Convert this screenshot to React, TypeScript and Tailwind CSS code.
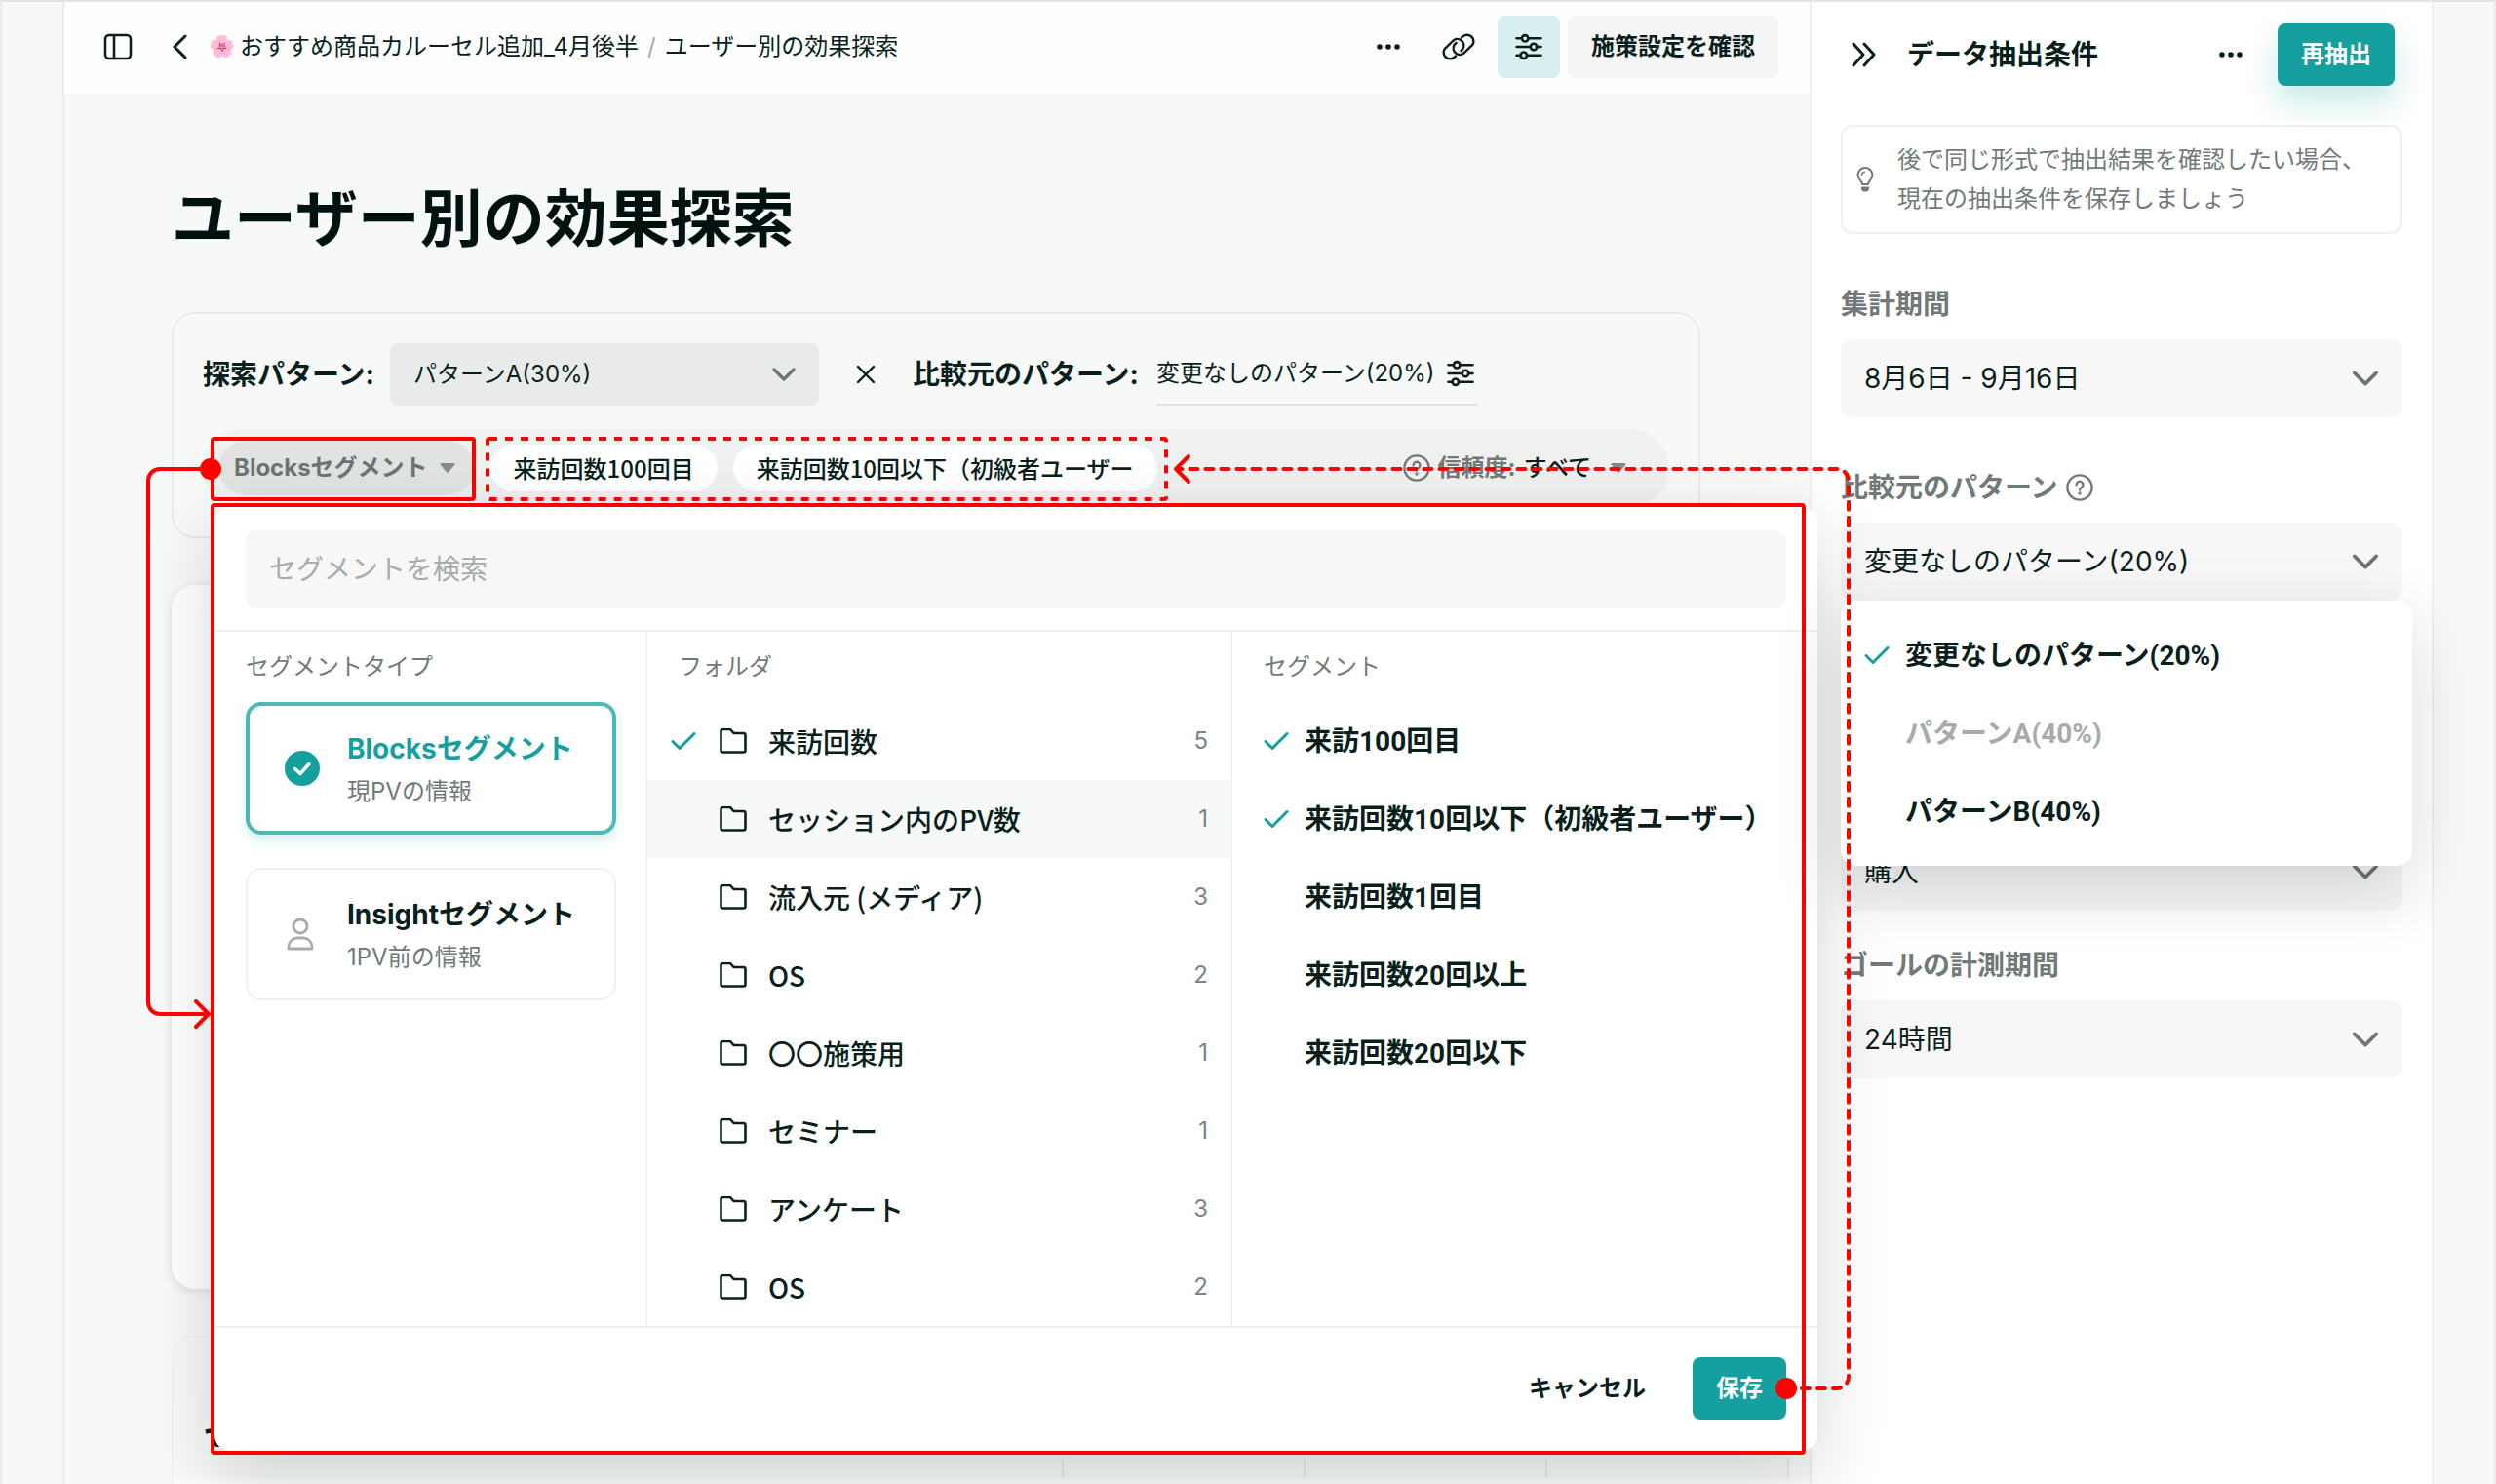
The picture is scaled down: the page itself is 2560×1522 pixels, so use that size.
import type { ReactNode } from "react";

type IconProps = { className?: string };

function PanelIcon({ className }: IconProps) {
  return (
    <svg viewBox="0 0 30 28" fill="none" stroke="currentColor" strokeWidth="2.5" className={className}>
      <rect x="2" y="2" width="26" height="24" rx="4" />
      <path d="M11 2v24" />
    </svg>
  );
}

function ChevronIcon({ className }: IconProps) {
  return (
    <svg viewBox="0 0 24 16" fill="none" stroke="currentColor" strokeWidth="3.2" strokeLinecap="round" strokeLinejoin="round" className={className}>
      <path d="M2 3l10 10L22 3" />
    </svg>
  );
}

function BackIcon({ className }: IconProps) {
  return (
    <svg viewBox="0 0 16 28" fill="none" stroke="currentColor" strokeWidth="3" strokeLinecap="round" strokeLinejoin="round" className={className}>
      <path d="M14 3L3 14l11 11" />
    </svg>
  );
}

function CollapseIcon({ className }: IconProps) {
  return (
    <svg viewBox="0 0 28 28" fill="none" stroke="currentColor" strokeWidth="3" strokeLinecap="round" strokeLinejoin="round" className={className}>
      <path d="M3 3l10 11L3 25M14 3l10 11-10 11" />
    </svg>
  );
}

function DotsIcon({ className }: IconProps) {
  return (
    <svg viewBox="0 0 24 24" fill="currentColor" className={className}>
      <circle cx="3" cy="12" r="2.8" />
      <circle cx="12" cy="12" r="2.8" />
      <circle cx="21" cy="12" r="2.8" />
    </svg>
  );
}

function LinkIcon({ className }: IconProps) {
  return (
    <svg viewBox="0 0 34 28" fill="none" stroke="currentColor" strokeWidth="2.5" strokeLinecap="round" className={className}>
      <path d="M14 23.5L12.5 24.8A6.6 6.6 0 0 1 3.2 15.5L12 7.2A6.6 6.6 0 0 1 21.3 16.2L19.5 18" />
      <path d="M20 4.5L21.5 3.2A6.6 6.6 0 0 1 30.8 12.5L22 20.8A6.6 6.6 0 0 1 12.7 11.8L14.5 10" />
    </svg>
  );
}

function SlidersIcon({ className }: IconProps) {
  return (
    <svg viewBox="0 0 28 28" fill="none" stroke="currentColor" strokeWidth="2.6" strokeLinecap="round" className={className}>
      <path d="M1.5 5.3h5M14 5.3h12.5M1.5 14h14M23 14h3.5M1.5 22.7h3.5M12.5 22.7h14" />
      <circle cx="10.2" cy="5.3" r="3.2" />
      <circle cx="19" cy="14" r="3.2" />
      <circle cx="8.8" cy="22.7" r="3.2" />
    </svg>
  );
}

function CheckIcon({ className }: IconProps) {
  return (
    <svg viewBox="0 0 26 20" fill="none" stroke="currentColor" strokeWidth="3" strokeLinecap="round" strokeLinejoin="round" className={className}>
      <path d="M2 10.5l7 7L24 2.5" />
    </svg>
  );
}

function CheckCircleIcon({ className }: IconProps) {
  return (
    <svg viewBox="0 0 36 36" fill="none" className={className}>
      <circle cx="18" cy="18" r="18" fill="currentColor" />
      <path d="M10.5 18.5l5.5 5 9-10" stroke="white" strokeWidth="3.4" strokeLinecap="round" strokeLinejoin="round" />
    </svg>
  );
}

function FolderIcon({ className }: IconProps) {
  return (
    <svg viewBox="0 0 28 26" fill="none" stroke="currentColor" strokeWidth="2.6" strokeLinejoin="round" className={className}>
      <path d="M1.5 3a2 2 0 0 1 2-2h7.500l3.500 4h10a2 2 0 0 1 2 2v15.500a2 2 0 0 1-2 2h-21a2 2 0 0 1-2-2z" />
    </svg>
  );
}

function UserIcon({ className }: IconProps) {
  return (
    <svg viewBox="0 0 28 34" fill="none" stroke="currentColor" strokeWidth="2.8" strokeLinejoin="round" className={className}>
      <circle cx="14" cy="9" r="7" />
      <path d="M2 32v-2c0-5 4-9 9-9h6c5 0 9 4 9 9v2z" />
    </svg>
  );
}

function HelpIcon({ className }: IconProps) {
  return (
    <svg viewBox="0 0 28 28" fill="none" stroke="currentColor" strokeWidth="2.4" strokeLinecap="round" className={className}>
      <circle cx="14" cy="14" r="12.6" />
      <path d="M10.6 11.2a3.4 3.4 0 1 1 5.2 2.9c-1.2.8-1.8 1.2-1.8 2.4" />
      <circle cx="14" cy="20" r="0.6" fill="currentColor" />
    </svg>
  );
}

function BulbIcon({ className }: IconProps) {
  return (
    <svg viewBox="0 0 18 26" fill="none" stroke="currentColor" strokeWidth="2" strokeLinecap="round" strokeLinejoin="round" className={className}>
      <path d="M6 18c0-4-4.500-5-4.500-9.500a7.500 7.500 0 0 1 15 0C16.500 13 12 14 12 18z" />
      <path d="M5.500 8.500A3.500 3.500 0 0 1 8.500 5.200" strokeWidth="1.500" />
      <path d="M6 21.500h6v1.500l-1.500 1.500h-3L6 23z" fill="currentColor" />
    </svg>
  );
}

function CaretIcon({ className }: IconProps) {
  return (
    <svg viewBox="0 0 16 10" fill="currentColor" className={className}>
      <path d="M1.500 0h13a1 1 0 0 1 .7 1.700l-6.200 7.600a1.300 1.300 0 0 1-2 0L.8 1.700A1 1 0 0 1 1.500 0z" />
    </svg>
  );
}

function Header() {
  return (
    <header className="flex h-[94px] shrink-0 items-center bg-[#fdfdfd] pr-8 pb-0.5 pl-10">
      <button type="button" aria-label="サイドバーを開閉">
        <PanelIcon className="h-7 w-[30px]" />
      </button>
      <a href="#" aria-label="戻る" className="ml-10">
        <BackIcon className="h-7 w-4" />
      </a>
      <nav className="ml-[22px] flex items-center text-2xl">
        <a href="#" className="flex items-center gap-2">
          <span className="w-6 text-[22px]">🌸</span>
          おすすめ商品カルーセル追加_4月後半
        </a>
        <span className="px-[9px] text-[#a5acaa]">/</span>
        <a href="#">ユーザー別の効果探索</a>
      </nav>
      <div className="ml-auto flex items-center">
        <button type="button" aria-label="その他">
          <DotsIcon className="size-6" />
        </button>
        <button type="button" aria-label="リンクをコピー" className="ml-[43px]">
          <LinkIcon className="h-7 w-[34px]" />
        </button>
        <button type="button" aria-label="抽出条件" className="ml-[23px] flex size-16 items-center justify-center rounded-lg bg-[#d9f0f0]">
          <SlidersIcon className="size-7" />
        </button>
        <button type="button" className="ml-2 h-16 rounded-lg bg-[#f5f5f5] px-6 text-2xl font-bold">
          施策設定を確認
        </button>
      </div>
    </header>
  );
}

function FilterPanel() {
  return (
    <section className="rounded-3xl border-2 border-[#e9ebea] p-[30px]">
      <div className="flex h-16 items-center">
        <label htmlFor="pattern" className="text-[28px] font-bold">
          探索パターン:
        </label>
        <div className="ml-4 grid w-[440px] items-center">
          <select id="pattern" className="col-start-1 row-start-1 h-16 appearance-none rounded-lg bg-[#e9ebea] pl-6 text-2xl">
            <option>パターンA(30%)</option>
            <option>パターンB(40%)</option>
          </select>
          <ChevronIcon className="pointer-events-none col-start-1 row-start-1 mr-6 h-4 w-6 justify-self-end text-[#6b7573]" />
        </div>
        <svg viewBox="0 0 20 20" fill="none" stroke="currentColor" strokeWidth="2.4" strokeLinecap="round" className="ml-[38px] size-5">
          <path d="M2 2l16 16M18 2L2 18" />
        </svg>
        <span className="ml-[38px] text-[28px] font-bold">比較元のパターン:</span>
        <button type="button" className="ml-[18px] flex h-16 items-center gap-3 border-b-2 border-[#e0e3e2] pr-1 text-2xl">
          変更なしのパターン(20%)
          <SlidersIcon className="size-7" />
        </button>
      </div>
      <div className="mt-6 flex h-20 items-center rounded-full bg-[#eff1f0] pr-11 pl-4">
        <button type="button" className="flex h-14 items-center gap-3 rounded-full bg-[#e0e3e2] pr-5 pl-4 text-2xl font-bold text-[#6b7573]">
          Blocksセグメント
          <CaretIcon className="h-2.5 w-4 text-[#848c8a]" />
        </button>
        <div className="ml-4 flex gap-4 font-['Noto_Sans_CJK_JP',sans-serif] text-2xl font-medium">
          <span className="flex h-12 items-center rounded-full bg-white px-6">来訪回数100回目</span>
          <span className="flex h-12 items-center rounded-full bg-white px-6">来訪回数10回以下（初級者ユーザー</span>
        </div>
        <button type="button" className="ml-auto flex items-center gap-2 text-2xl">
          <HelpIcon className="size-7 text-[#717a78]" />
          <span className="font-bold text-[#717a78]">信頼度:</span>
          <span className="font-medium">すべて</span>
          <CaretIcon className="ml-3 h-2.5 w-4 text-[#848c8a]" />
        </button>
      </div>
    </section>
  );
}

const folders = [
  { name: "来訪回数", count: 5, checked: true },
  { name: "セッション内のPV数", count: 1, active: true },
  { name: "流入元 (メディア)", count: 3 },
  { name: "OS", count: 2 },
  { name: "〇〇施策用", count: 1 },
  { name: "セミナー", count: 1 },
  { name: "アンケート", count: 3 },
  { name: "OS", count: 2 },
];

const segments = [
  { name: "来訪100回目", checked: true },
  { name: "来訪回数10回以下（初級者ユーザー）", checked: true },
  { name: "来訪回数1回目" },
  { name: "来訪回数20回以上" },
  { name: "来訪回数20回以下" },
];

function ColumnTitle({ children }: { children: ReactNode }) {
  return <h3 className="flex h-[72px] items-center text-2xl text-[#717a78]">{children}</h3>;
}

function SegmentDialog() {
  return (
    <div
      role="dialog"
      aria-label="セグメントを選択"
      className="absolute top-[518px] -right-2 left-[154px] z-10 rounded-2xl bg-white pt-6 shadow-[0_24px_72px_rgba(0,20,16,0.18)]"
    >
      <div className="px-8 pb-[22px]">
        <input
          type="text"
          aria-label="セグメントを検索"
          placeholder="セグメントを検索"
          className="block h-20 w-full rounded-xl bg-[#f7f7f7] px-6 text-[28px] placeholder:text-[#a5acaa]"
        />
      </div>
      <div className="flex border-y-2 border-[#f0f1f1]">
        <div className="w-[444px] shrink-0 border-r border-[#ebeded] pr-[31px] pl-8">
          <ColumnTitle>セグメントタイプ</ColumnTitle>
          <button
            type="button"
            aria-pressed="true"
            className="flex h-[136px] w-full items-center rounded-2xl border-4 border-[#4cb9b7] pl-9 text-left shadow-[0_6px_12px_rgba(21,159,159,0.18)]"
          >
            <CheckCircleIcon className="size-9 text-[#159f9f]" />
            <span className="ml-7 flex flex-col pt-1">
              <span className="text-[28px] leading-11 font-bold text-[#159f9f]">Blocksセグメント</span>
              <span className="text-2xl leading-11 text-[#717a78]">現PVの情報</span>
            </span>
          </button>
          <button
            type="button"
            aria-pressed="false"
            className="mt-[34px] flex h-[136px] w-full items-center rounded-2xl border-2 border-[#f0f1f1] pl-10 text-left"
          >
            <UserIcon className="h-[34px] w-7 text-[#a5acaa]" />
            <span className="ml-[34px] flex flex-col pt-1">
              <span className="text-[28px] leading-11 font-bold">Insightセグメント</span>
              <span className="text-2xl leading-11 text-[#717a78]">1PV前の情報</span>
            </span>
          </button>
        </div>
        <div className="w-[600px] shrink-0 border-r border-[#ebeded]">
          <div className="pl-8">
            <ColumnTitle>フォルダ</ColumnTitle>
          </div>
          <ul>
            {folders.map((folder, i) => (
              <li key={i} className={folder.active ? "bg-[#f7f9f8]" : ""}>
                <button type="button" className="flex h-20 w-full items-center pr-6 pl-6">
                  <span className="w-[50px]">{folder.checked && <CheckIcon className="h-5 w-[26px] text-[#159f9f]" />}</span>
                  <FolderIcon className="h-[26px] w-7" />
                  <span className="ml-[22px] font-['Noto_Sans_CJK_JP',sans-serif] text-[28px] font-medium">{folder.name}</span>
                  <span className="ml-auto text-2xl text-[#7b8482]">{folder.count}</span>
                </button>
              </li>
            ))}
          </ul>
        </div>
        <div className="flex-1 pl-8">
          <ColumnTitle>セグメント</ColumnTitle>
          <ul>
            {segments.map((segment) => (
              <li key={segment.name}>
                <button type="button" className="flex h-20 w-full items-center font-[Roboto,'Noto_Sans_CJK_JP',sans-serif] text-[28px] font-bold">
                  <span className="w-[42px]">{segment.checked && <CheckIcon className="h-5 w-[26px] text-[#159f9f]" />}</span>
                  <span className="pt-0.5">{segment.name}</span>
                </button>
              </li>
            ))}
          </ul>
        </div>
      </div>
      <div className="flex items-center justify-end gap-12 px-8 pt-[30px] pb-8 text-2xl font-bold">
        <button type="button">キャンセル</button>
        <button type="button" className="h-16 w-24 rounded-lg bg-[#159f9f] text-white">
          保存
        </button>
      </div>
    </div>
  );
}

const fieldClass = "col-start-1 row-start-1 h-20 appearance-none rounded-xl bg-[#f7f7f7] pl-6 text-[28px]";
const fieldChevronClass = "pointer-events-none col-start-1 row-start-1 mr-6 h-[18px] w-7 justify-self-end text-[#6b7573]";

const options = [
  { name: "変更なしのパターン(20%)", checked: true },
  { name: "パターンA(40%)", disabled: true },
  { name: "パターンB(40%)" },
];

function ComparePattern() {
  return (
    <div>
      <h3 className="flex h-10 items-center gap-2 text-[28px] font-bold text-[#717a78]">
        比較元のパターン
        <HelpIcon className="size-7" />
      </h3>
      <div className="relative mt-4">
        <button type="button" aria-expanded="true" className="flex h-20 w-full items-center justify-between rounded-xl bg-[#f7f7f7] px-6 text-[28px]">
          変更なしのパターン(20%)
          <ChevronIcon className="h-[18px] w-7 text-[#6b7573]" />
        </button>
        <ul className="absolute top-full -right-2.5 left-0 z-10 rounded-2xl bg-white py-4 font-[Roboto,'Noto_Sans_CJK_JP',sans-serif] shadow-[0_24px_72px_rgba(0,20,16,0.16)]">
          {options.map((option) => (
            <li key={option.name}>
              <button type="button" disabled={option.disabled} className="flex h-20 w-full items-center px-6 text-[28px] font-bold disabled:text-[#a5acaa]">
                <span className="w-[42px]">{option.checked && <CheckIcon className="h-5 w-[26px] text-[#159f9f]" />}</span>
                <span className="pt-0.5">{option.name}</span>
              </button>
            </li>
          ))}
        </ul>
      </div>
    </div>
  );
}

function Sidebar() {
  return (
    <aside className="w-[640px] shrink-0 border-x-2 border-[#f0f1f1] bg-white px-[30px]">
      <div className="mt-[22px] flex h-16 items-center">
        <button type="button" aria-label="閉じる" className="ml-2.5">
          <CollapseIcon className="size-7" />
        </button>
        <h2 className="ml-[30px] text-[28px] font-bold">データ抽出条件</h2>
        <button type="button" aria-label="その他" className="ml-auto">
          <DotsIcon className="size-6" />
        </button>
        <button type="button" className="mr-2 ml-9 h-16 w-[120px] rounded-lg bg-[#159f9f] text-2xl font-bold text-white shadow-[0_16px_32px_rgba(21,159,159,0.24)]">
          再抽出
        </button>
      </div>
      <div className="mt-10 flex h-28 items-center rounded-xl border-2 border-[#eff0f0] pl-3.5 text-2xl leading-10 text-[#717a78]">
        <BulbIcon className="h-[26px] w-[18px] shrink-0" />
        <p className="ml-6">
          後で同じ形式で抽出結果を確認したい場合、
          <br />
          現在の抽出条件を保存しましょう
        </p>
      </div>
      <div className="mt-[52px]">
        <h3 className="flex h-10 items-center text-[28px] font-bold text-[#717a78]">集計期間</h3>
        <button type="button" className="mt-4 flex h-20 w-full items-center justify-between rounded-xl bg-[#f7f7f7] px-6 text-[28px]">
          8月6日 - 9月16日
          <ChevronIcon className="h-[18px] w-7 text-[#6b7573]" />
        </button>
      </div>
      <div className="mt-[52px]">
        <ComparePattern />
      </div>
      <div className="mt-[238px] grid items-center">
        <select aria-label="ゴール" className={fieldClass}>
          <option>購入</option>
        </select>
        <ChevronIcon className={fieldChevronClass} />
      </div>
      <div className="mt-9">
        <label htmlFor="goal-period" className="flex h-10 items-center text-[28px] font-bold text-[#717a78]">
          ゴールの計測期間
        </label>
        <div className="mt-4 grid items-center">
          <select id="goal-period" className={fieldClass}>
            <option>24時間</option>
          </select>
          <ChevronIcon className={fieldChevronClass} />
        </div>
      </div>
    </aside>
  );
}

// Red call-outs that connect the trigger pill, the dialog and the chips
function Annotations() {
  return (
    <svg width="2560" height="1522" viewBox="0 0 2560 1522" fill="none" stroke="#ff0000" strokeWidth="4" className="pointer-events-none absolute -top-0.5 -left-0.5 z-20">
      <rect x="218" y="450" width="268" height="62" rx="2" />
      <rect x="218" y="518" width="1632" height="972" rx="2" />
      <rect x="500" y="450" width="696" height="62" rx="2" strokeDasharray="8 8" />
      <path d="M216 481H164a12 12 0 0 0-12 12V1028a12 12 0 0 0 12 12H213" />
      <path d="M201 1027l13 13-13 13" strokeLinecap="round" strokeLinejoin="round" />
      <circle cx="216" cy="481" r="11" fill="#ff0000" stroke="none" />
      <path d="M1832 1424H1884a12 12 0 0 0 12-12V493a12 12 0 0 0-12-12H1208" strokeDasharray="8 8" strokeLinecap="round" />
      <path d="M1219 468l-13 13 13 13" strokeLinecap="round" strokeLinejoin="round" />
      <circle cx="1832" cy="1424" r="11" fill="#ff0000" stroke="none" />
    </svg>
  );
}

export default function App() {
  return (
    <div
      lang="ja"
      className="relative flex min-h-screen w-full overflow-hidden border-2 border-t-[#e2e3e3] border-r-[#ebeded] border-b-[#e2e3e3] border-l-[#ebeded] bg-[#f7f9f8] font-[Inter,'Noto_Sans_CJK_JP',sans-serif] text-[#0a1f1c]"
    >
      <div className="relative ml-[62px] flex min-w-0 flex-1 flex-col border-l-2 border-[#ebeded]">
        <Header />
        <main className="flex flex-1 flex-col pt-20 pr-28 pl-[110px]">
          <h1 className="text-[64px] leading-24 font-bold text-[#00120f]">ユーザー別の効果探索</h1>
          <div className="mt-12 flex flex-1 flex-col gap-12">
            <FilterPanel />
            <section className="h-[722px] rounded-3xl bg-white shadow-[0_2px_8px_rgba(0,20,16,0.12)]" />
            <section className="-mr-28 flex flex-1 flex-col rounded-tl-3xl border-t border-l border-[#eef0f0] pt-[76px]">
              <h2 className="pl-8 text-[32px] leading-12 font-bold">セグ</h2>
              <div className="mt-auto grid grid-cols-[914px_248px_248px_248px] border-b-6 border-white/60">
                <span className="h-[22px] border-r-2 border-[#e9ebea]" />
                <span className="h-[22px] border-r-2 border-[#e9ebea]" />
                <span className="h-[22px] border-r-2 border-[#e9ebea]" />
                <span className="h-[22px] border-r-2 border-[#e9ebea]" />
              </div>
            </section>
          </div>
        </main>
        <SegmentDialog />
      </div>
      <Sidebar />
      <div className="w-[62px] shrink-0" />
      <Annotations />
    </div>
  );
}
